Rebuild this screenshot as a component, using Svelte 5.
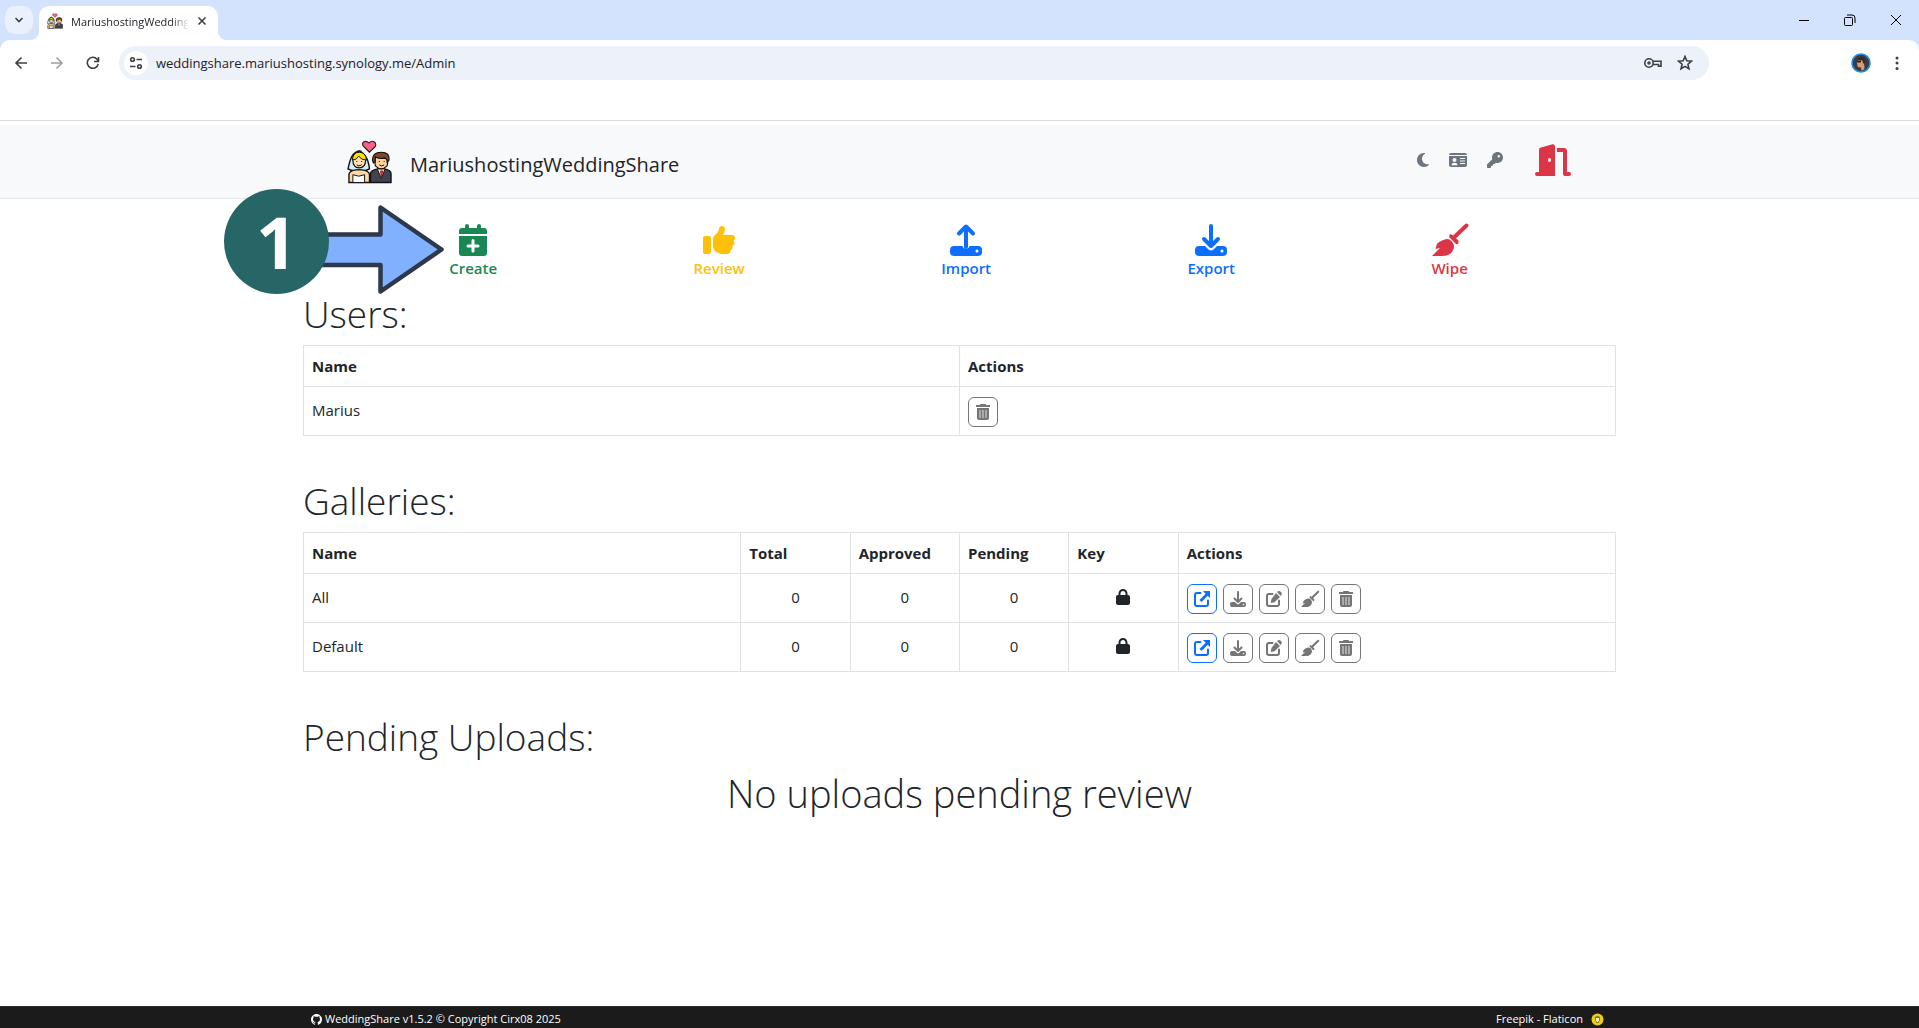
<script lang="ts">
	let address = $state('weddingshare.mariushosting.synology.me/Admin');

	const tools = [
		{ label: 'Create', icon: 'calendar', tone: 'success' },
		{ label: 'Review', icon: 'thumb', tone: 'warning' },
		{ label: 'Import', icon: 'import', tone: 'primary' },
		{ label: 'Export', icon: 'export', tone: 'primary' },
		{ label: 'Wipe', icon: 'broom', tone: 'danger' }
	];

	const users = [{ name: 'Marius' }];

	const galleries = [
		{ name: 'All', total: 0, approved: 0, pending: 0 },
		{ name: 'Default', total: 0, approved: 0, pending: 0 }
	];

	const galleryActions = [
		{ icon: 'open', label: 'Open' },
		{ icon: 'export', label: 'Download' },
		{ icon: 'edit', label: 'Edit' },
		{ icon: 'broom', label: 'Wipe' },
		{ icon: 'trash', label: 'Delete' }
	];
</script>

{#snippet couple()}
	<svg class="couple" viewBox="0 0 46 44" aria-hidden="true">
		<path d="M23 12 16.500 5.500C14.500 2 18.500-1 22.500 2.500 26-1 30.500 1.500 29 6Z" fill="#ff5f87" stroke="#222" stroke-width="1.200" />
		<path d="M12 11C4 13 3 21 1 29q5 3 11 1 6 2 11-1C22 21 20 13 12 11Z" fill="#cdeefa" stroke="#111" stroke-width="1.400" />
		<path d="M2 43V35q0-4 7-5h6q8 1 8 5v8Z" fill="#ffd9a8" stroke="#111" stroke-width="1.400" />
		<path d="M6 43v-8q6 3 12 0v8Z" fill="#fff" stroke="#111" />
		<path d="M6 20q0-7 6.500-7t6.500 7q0 8-6.500 8T6 20Z" fill="#ffdfb3" stroke="#111" stroke-width="1.200" />
		<path d="M5.500 20Q6 12 12.500 12T20 20Q14 20 12 16 10 20 5.500 20Z" fill="#ffdf00" stroke="#111" />
		<path d="M10 11.500q3-1.500 5 0" fill="none" stroke="#222" stroke-width="1.600" />
		<path d="M24 43V34q0-4 8-5h6q7 1 7 5v9Z" fill="#414450" stroke="#111" stroke-width="1.400" />
		<path d="m31 29 4 10 4-10Z" fill="#fff" stroke="#111" />
		<path d="m34 31 1 7 2-7Z" fill="#e0252d" stroke="#900" stroke-width=".500" />
		<path d="M28 18q0-5 7-5t7 5-1 8q-6 6-12 0Z" fill="#ffd49c" stroke="#111" stroke-width="1.200" />
		<path d="M26 20q0-8 9-8t8 8l-2 2q0-4-3-4-6 1-9-1v5l-2 1Z" fill="#7d4725" stroke="#111" stroke-width="1.200" />
		<path d="M10 21v1m5-1v1m-5 3q2 2 5 0m18-4v1m5-1v1m-5 3q2 2 5 0" fill="none" stroke="#111" />
	</svg>
{/snippet}

{#snippet icon(name: string)}
	{#if name === 'calendar'}
		<svg class="icon" viewBox="0 0 448 512" aria-hidden="true">
			<path d="M96 32a32 32 0 0 1 64 0v32h128V32a32 32 0 0 1 64 0v32h48a48 48 0 0 1 48 48v48H0v-48a48 48 0 0 1 48-48h48ZM0 192h448v272a48 48 0 0 1-48 48H48a48 48 0 0 1-48-48Zm200 72v64h-56a24 24 0 0 0 0 48h56v56a24 24 0 0 0 48 0v-56h56a24 24 0 0 0 0-48h-56v-64a24 24 0 0 0-48 0Z" />
		</svg>
	{:else if name === 'thumb'}
		<svg class="icon" viewBox="0 0 512 512" aria-hidden="true">
			<path d="M313.400 32.900c26 5.200 42.900 30.500 37.700 56.500l-2.300 11.400c-5.300 26.700-15.100 52.100-28.800 75.200H464c26.500 0 48 21.500 48 48 0 18.500-10.500 34.600-25.900 42.600C497 275.400 504 288.900 504 304c0 23.400-16.800 42.900-38.900 47.100 4.400 7.300 6.900 15.800 6.900 24.900 0 21.300-13.900 39.400-33.100 45.600.7 3.300 1.100 6.800 1.100 10.400 0 26.500-21.500 48-48 48H294.500c-19 0-37.500-5.600-53.300-16.100l-38.500-25.700C176 420.400 160 390.400 160 358.300V247.100c0-29.200 13.300-56.700 36-75l7.400-5.900c26.500-21.200 44.600-51 51.200-84.200l2.300-11.400c5.200-26 30.500-42.900 56.500-37.700ZM32 192h64c17.700 0 32 14.300 32 32v224c0 17.700-14.300 32-32 32H32c-17.700 0-32-14.300-32-32V224c0-17.700 14.300-32 32-32Z" />
		</svg>
	{:else if name === 'import' || name === 'export'}
		<svg class="icon" viewBox="0 0 32 32" aria-hidden="true">
			{#if name === 'import'}
				<path class="line" d="M16 23V2.500M9 9.500l7-7 7 7" />
				<path d="M4 22h8.500a3.600 3.600 0 0 0 7 0H28a4 4 0 0 1 4 4v2a4 4 0 0 1-4 4H4a4 4 0 0 1-4-4v-2a4 4 0 0 1 4-4Zm23 3.500a1.500 1.500 0 1 0 0 3 1.500 1.500 0 0 0 0-3Z" />
			{:else}
				<path class="line" d="M16 2v20M9 15l7 7 7-7" />
				<path d="M4 22h6l3.500 3.500q2.500 2.200 5 0L22 22h6a4 4 0 0 1 4 4v2a4 4 0 0 1-4 4H4a4 4 0 0 1-4-4v-2a4 4 0 0 1 4-4Zm23 3.500a1.500 1.500 0 1 0 0 3 1.500 1.500 0 0 0 0-3Z" />
			{/if}
		</svg>
	{:else if name === 'broom'}
		<svg class="icon" viewBox="0 0 36 32" aria-hidden="true">
			<path class="line" d="M34.500 1.500 22.500 13" />
			<path d="M18 10q-1.500 2-.5 3.500l6.500 6.500q1.500 1 2.500-1v-2.500l-6-5.500Z" />
			<path d="M14.500 15q2.500-.5 5 2t2.500 6c-.5 5-5 9-11 9H0l8-8-4.500 1q.5-8 11-10Z" />
		</svg>
	{:else if name === 'trash'}
		<svg class="icon" viewBox="0 0 14 16" aria-hidden="true">
			<path fill-rule="evenodd" d="M4.500 0h5l.7 1H14v2H0V1h3.800ZM1 4h12v10a2 2 0 0 1-2 2H3a2 2 0 0 1-2-2Zm2.600 2v8h.8V6Zm3 0v8h.8V6Zm3 0v8h.8V6Z" />
		</svg>
	{:else if name === 'open'}
		<svg class="icon" viewBox="0 0 16 16" aria-hidden="true">
			<path d="M9 0h7v7l-2.300-2.300-6.200 6.200-2-2 6.200-6.200Z" />
			<path class="frame" d="M6.500 2H3Q1 2 1 4v9q0 2 2 2h9q2 0 2-2V9.500" />
		</svg>
	{:else if name === 'edit'}
		<svg class="icon" viewBox="0 0 16 16" aria-hidden="true">
			<path d="m11 1 1-.7q1.500-.8 2.700.4l.7.7q1 1.300 0 2.600L14.700 5ZM10 2l4 4-5.500 5.300L4.700 12l.8-4Z" />
			<path class="frame" d="M6.500 3H3Q1 3 1 5v8q0 2 2 2h8q2 0 2-2V9.500" />
		</svg>
	{:else if name === 'lock'}
		<svg class="icon" viewBox="0 0 448 512" aria-hidden="true">
			<path d="M144 144v48h160v-48c0-44.200-35.800-80-80-80s-80 35.800-80 80Zm-64 48v-48C80 64.500 144.500 0 224 0s144 64.500 144 144v48h16c35.300 0 64 28.700 64 64v192c0 35.300-28.700 64-64 64H64c-35.300 0-64-28.700-64-64V256c0-35.300 28.700-64 64-64Z" />
		</svg>
	{:else if name === 'moon'}
		<svg class="icon" viewBox="0 0 384 512" aria-hidden="true">
			<path d="M223.500 32C100 32 0 132.300 0 256s100 224 223.500 224c60.600 0 115.500-24.200 155.800-63.400 5-4.900 6.300-12.500 3.100-18.700s-10.100-9.700-17-8.500c-9.800 1.700-19.800 2.600-30.100 2.600-96.900 0-175.500-78.800-175.500-176 0-65.800 36-123.100 89.300-153.300 6.100-3.500 9.200-10.500 7.700-17.300s-7.300-11.900-14.300-12.500c-6.300-.5-12.600-.8-19-.8Z" />
		</svg>
	{:else if name === 'card'}
		<svg class="icon" viewBox="0 0 18 16" aria-hidden="true">
			<path fill-rule="evenodd" d="M0 3q0-2 2-2h14q2 0 2 2ZM0 4h18v9q0 2-2 2H2q-2 0-2-2ZM5.500 6a2 2 0 1 0 0 4 2 2 0 0 0 0-4ZM2.500 13.200h6q0-2.200-2-2.200h-2q-2 0-2 2.200ZM11 6v1h5V6Zm0 2.500v1h5v-1Zm0 2.500v1h5v-1Z" />
		</svg>
	{:else if name === 'key'}
		<svg class="icon" viewBox="0 0 512 512" aria-hidden="true">
			<path d="M336 352c97.200 0 176-78.800 176-176S433.200 0 336 0 160 78.800 160 176c0 18.700 2.900 36.800 8.300 53.700L7 391c-4.500 4.500-7 10.600-7 17v80c0 13.300 10.700 24 24 24h80c13.300 0 24-10.700 24-24v-40h40c13.300 0 24-10.700 24-24v-40h40c6.400 0 12.500-2.500 17-7l33.300-33.300c16.900 5.400 35 8.300 53.700 8.300Zm40-256a40 40 0 1 1 0 80 40 40 0 1 1 0-80Z" />
		</svg>
	{:else if name === 'door'}
		<svg class="icon" viewBox="0 0 36 32" aria-hidden="true">
			<path fill-rule="evenodd" d="M4 5.500Q4 4 6 3.500L17.500.200Q20 0 20 2.500V32H2a2 2 0 0 1 0-4h2ZM14.500 14a1.500 2 0 1 0 0 4 1.500 2 0 0 0 0-4Z" />
			<path d="M22 4h7q3 0 3 3v21h2a2 2 0 0 1 0 4h-4q-2 0-2-2V8h-6Z" />
		</svg>
	{/if}
{/snippet}

<div class="window">
	<div class="browser">
		<div class="tabs">
			<button class="tab-search" aria-label="Search tabs">
				<svg viewBox="0 0 10 10" width="10" height="10"><path d="m1.500 3 3.500 3.500L8.500 3" /></svg>
			</button>
			<div class="tab">
				{@render couple()}
				<span class="tab-title">MariushostingWeddingShare</span>
				<button class="plain" aria-label="Close tab">
					<svg viewBox="0 0 10 10" width="10" height="10"><path d="m1.500 1.500 7 7m0-7-7 7" /></svg>
				</button>
			</div>
			<div class="window-buttons">
				<button class="plain" aria-label="Minimize">
					<svg viewBox="0 0 12 12" width="12" height="12"><path d="M1 6.500h10" /></svg>
				</button>
				<button class="plain" aria-label="Restore">
					<svg viewBox="0 0 12 12" width="12" height="12"><path d="M3 1h5q3 0 3 3v5M1.500 3.500h6q1 0 1 1v6q0 1-1 1h-6q-1 0-1-1v-6q0-1 1-1Z" /></svg>
				</button>
				<button class="plain" aria-label="Close">
					<svg viewBox="0 0 12 12" width="12" height="12"><path d="m1 1 10 10M11 1 1 11" /></svg>
				</button>
			</div>
		</div>
		<div class="toolbar">
			<button class="plain" aria-label="Back">
				<svg viewBox="0 0 14 14" width="14" height="14"><path d="M13 7H2m5.500-5.500L2 7l5.500 5.500" /></svg>
			</button>
			<button class="plain faded" aria-label="Forward">
				<svg viewBox="0 0 14 14" width="14" height="14"><path d="M1 7h11M6.500 1.500 12 7l-5.500 5.500" /></svg>
			</button>
			<button class="plain" aria-label="Reload">
				<svg viewBox="0 0 14 14" width="14" height="14"><path d="M12.200 8A5.500 5.500 0 1 1 11 3.200L12.500 5M12.500 1v4.500H8" /></svg>
			</button>
			<div class="address">
				<button class="plain site" aria-label="Site information">
					<svg viewBox="0 0 14 14" width="14" height="14"><circle cx="3.500" cy="3.500" r="1.800" /><path d="M7.500 3.500H13M1 10.500h5.500" /><circle cx="10.500" cy="10.500" r="1.800" /></svg>
				</button>
				<div class="url">
					<input type="text" aria-label="Address" bind:value={address} />
				</div>
				<button class="plain" aria-label="Passwords">
					<svg viewBox="0 0 18 12" width="18" height="12"><circle cx="5" cy="6" r="4.200" /><circle cx="5" cy="6" r="1" /><path d="M9 4.300h8v5h-2.500V7.500H9" /></svg>
				</button>
				<button class="plain" aria-label="Bookmark">
					<svg viewBox="0 0 16 16" width="16" height="16"><path d="m8 1.500 1.800 4.300 4.700.4-3.600 3 1.100 4.600-4-2.400-4 2.400 1.100-4.600-3.600-3 4.700-.4Z" /></svg>
				</button>
			</div>
			<button class="plain" aria-label="Profile">
				<svg class="avatar" viewBox="0 0 20 20" width="20" height="20">
					<circle cx="10" cy="10" r="9" fill="#3b3d45" stroke="#1b8fee" />
					<path d="M7 7.500 6 11l1 3 3 .5.500 3q3-.5 3-3l-.5-4 .5-4Z" fill="#d99a76" />
					<path d="M6.500 7Q7 3.500 11 4q4 .5 3 6l-2 .5-.5-3Z" fill="#3a2a26" />
					<path d="m6 8 4-.3v1.500L7 9.500Z" fill="#161616" />
				</svg>
			</button>
			<button class="plain" aria-label="Menu">
				<svg class="dots" viewBox="0 0 4 14" width="4" height="14"><circle cx="2" cy="2" r="1.500" /><circle cx="2" cy="7" r="1.500" /><circle cx="2" cy="12.500" r="1.500" /></svg>
			</button>
		</div>
	</div>

	<header>
		<div class="header-inner">
			<a class="brand" href="/">
				{@render couple()}
				<span>MariushostingWeddingShare</span>
			</a>
			<nav>
				<button class="plain moon" aria-label="Dark mode">{@render icon('moon')}</button>
				<button class="plain card" aria-label="Identity">{@render icon('card')}</button>
				<button class="plain key" aria-label="Change password">{@render icon('key')}</button>
				<button class="plain door" aria-label="Log out">{@render icon('door')}</button>
			</nav>
		</div>
	</header>

	<main>
		<div class="tools">
			{#each tools as tool}
				<button class="tool {tool.tone}">
					{@render icon(tool.icon)}
					<span>{tool.label}</span>
				</button>
			{/each}
		</div>

		<div class="callout">
			<svg viewBox="0 0 224 106" width="224" height="106" aria-hidden="true">
				<path d="M60 45.500h96.500V18.500L217.500 60.500l-61 42V76H60Z" fill="#80b0ff" stroke="#2d384b" stroke-width="4.500" stroke-linejoin="round" />
			</svg>
			<span class="step">1</span>
		</div>

		<section>
			<h1>Users:</h1>
			<table>
				<thead>
					<tr><th class="half">Name</th><th>Actions</th></tr>
				</thead>
				<tbody>
					{#each users as user}
						<tr>
							<td>{user.name}</td>
							<td class="buttons">
								<div class="actions">
									<button aria-label="Delete">{@render icon('trash')}</button>
								</div>
							</td>
						</tr>
					{/each}
				</tbody>
			</table>
		</section>

		<section>
			<h1>Galleries:</h1>
			<table>
				<colgroup>
					<col class="wide" /><col /><col /><col /><col /><col class="wide" />
				</colgroup>
				<thead>
					<tr>
						<th>Name</th>
						<th>Total</th>
						<th>Approved</th>
						<th>Pending</th>
						<th>Key</th>
						<th>Actions</th>
					</tr>
				</thead>
				<tbody>
					{#each galleries as gallery}
						<tr>
							<td>{gallery.name}</td>
							<td class="center">{gallery.total}</td>
							<td class="center">{gallery.approved}</td>
							<td class="center">{gallery.pending}</td>
							<td class="center lock">{@render icon('lock')}</td>
							<td class="buttons">
								<div class="actions">
									{#each galleryActions as action}
										<button class={action.icon} aria-label={action.label}>{@render icon(action.icon)}</button>
									{/each}
								</div>
							</td>
						</tr>
					{/each}
				</tbody>
			</table>
		</section>

		<section>
			<h1>Pending Uploads:</h1>
			<p class="empty">No uploads pending review</p>
		</section>
	</main>

	<footer>
		<div class="footer-inner">
			<a href="https://github.com/Cirx08/WeddingShare">
				<svg viewBox="0 0 16 16" width="11" height="11" aria-hidden="true">
					<path fill="#fff" d="M8 0C3.580 0 0 3.580 0 8c0 3.540 2.290 6.530 5.470 7.590.4.070.55-.17.55-.38 0-.19-.01-.82-.01-1.490-2.010.37-2.530-.49-2.690-.94-.09-.23-.48-.94-.82-1.130-.28-.15-.68-.52-.01-.53.63-.01 1.080.58 1.230.82.72 1.210 1.870.87 2.330.66.070-.52.28-.87.51-1.070-1.780-.2-3.640-.89-3.640-3.950 0-.87.31-1.590.82-2.150-.08-.2-.36-1.020.080-2.120 0 0 .67-.21 2.200.82.64-.18 1.320-.27 2-.27s1.360.09 2 .27c1.530-1.040 2.200-.82 2.200-.82.44 1.100.16 1.920.080 2.120.51.56.82 1.270.82 2.150 0 3.070-1.870 3.750-3.650 3.950.29.25.54.73.54 1.480 0 1.070-.01 1.930-.01 2.200 0 .21.15.46.55.38A8.010 8.010 0 0 0 16 8c0-4.420-3.580-8-8-8Z" />
				</svg>
				<span>WeddingShare v1.5.2 © Copyright Cirx08 2025</span>
			</a>
			<div class="credits">
				<a href="https://www.flaticon.com">Freepik - Flaticon</a>
				<svg viewBox="0 0 13 13" width="13" height="13" aria-hidden="true">
					<circle cx="6.500" cy="6.500" r="6" fill="#f0cc12" />
					<path d="M4 4q2.500-2 5 0v3L7.500 10h-2L4 7Z" fill="#8c7416" />
					<path d="M5 5h3v2.500L7 9H6L5 7.500Z" fill="#fff3c0" />
				</svg>
			</div>
		</div>
	</footer>
</div>

<style>
	:global(body) {
		margin: 0;
		background: #fff;
		color: #212529;
		font-family: "Open Sans", "Noto Sans", sans-serif;
	}

	* {
		box-sizing: border-box;
	}

	.window {
		display: flex;
		flex-direction: column;
		min-height: 100vh;
	}

	button {
		font: inherit;
		cursor: pointer;
	}

	.plain {
		display: flex;
		align-items: center;
		justify-content: center;
		padding: 0;
		border: 0;
		background: none;
		color: inherit;
	}

	a {
		color: inherit;
		text-decoration: none;
	}

	svg {
		flex: none;
		display: block;
	}

	.icon {
		fill: currentColor;
		overflow: visible;
	}

	.icon .line {
		fill: none;
		stroke: currentColor;
		stroke-width: 4;
		stroke-linecap: round;
		stroke-linejoin: round;
	}

	.icon .frame {
		fill: none;
		stroke: currentColor;
		stroke-width: 2;
		stroke-linecap: round;
	}

	/* browser chrome */
	.browser {
		height: 121px;
		border-bottom: 1px solid #dcdcdc;
		background: #d3e2fd;
	}

	.browser svg {
		fill: none;
		stroke: #3c4043;
		stroke-width: 1.6;
	}

	.tabs {
		display: flex;
		align-items: center;
		height: 40px;
		padding-left: 5px;
	}

	.tab-search {
		display: flex;
		align-items: center;
		justify-content: center;
		width: 28px;
		height: 28px;
		padding: 0;
		border: 0;
		border-radius: 10px;
		background: #ebf1fc;
	}

	.tab {
		position: relative;
		display: flex;
		align-self: flex-end;
		align-items: center;
		gap: 8px;
		width: 179px;
		height: 34px;
		margin-left: 6px;
		padding: 0 11px 4px 8px;
		border-radius: 10px 10px 0 0;
		background: #fff;
		font-size: 11px;
	}

	.tab::before,
	.tab::after {
		content: '';
		position: absolute;
		bottom: 0;
		width: 10px;
		height: 10px;
	}

	.tab::before {
		right: 100%;
		background: radial-gradient(circle at 0 0, #d3e2fd 10px, #fff 11px);
	}

	.tab::after {
		left: 100%;
		background: radial-gradient(circle at 100% 0, #d3e2fd 10px, #fff 11px);
	}

	.tab .couple {
		width: 16px;
		height: 16px;
	}

	.tab-title {
		flex: 1;
		overflow: hidden;
		white-space: nowrap;
		mask-image: linear-gradient(to right, #000 85%, transparent);
	}

	.window-buttons {
		display: flex;
		gap: 34px;
		margin-left: auto;
		padding-right: 17px;
	}

	.window-buttons svg {
		stroke: #000;
		stroke-width: 1;
	}

	.toolbar {
		display: flex;
		align-items: center;
		gap: 22px;
		height: 80px;
		padding: 0 20px 34px 14px;
		border-radius: 10px 10px 0 0;
		background: #fff;
	}

	.faded {
		opacity: 0.5;
	}

	.address {
		display: flex;
		flex: 1;
		align-items: center;
		gap: 15px;
		height: 34px;
		margin: 0 120px 0 -3px;
		padding: 0 16px 0 5px;
		border-radius: 17px;
		background: #ecf1fa;
	}

	.site {
		width: 24px;
		height: 24px;
		margin-right: -7px;
		border-radius: 50%;
		background: #fff;
	}

	.url {
		flex: 1;
	}

	.url input {
		display: block;
		width: 100%;
		padding: 0;
		border: 0;
		background: none;
		color: #1f2023;
		font: inherit;
		font-size: 13px;
		outline: 0;
	}

	.browser .avatar {
		margin-right: 2px;
		stroke: none;
	}

	.browser .dots {
		fill: #3c4043;
		stroke: none;
	}

	/* site header */
	header {
		margin-top: 4px;
		border-bottom: 1px solid #e6e9ec;
		background: #f8f9fb;
	}

	.header-inner,
	main,
	.footer-inner {
		width: 100%;
		max-width: 1313px;
		margin: 0 auto;
	}

	.header-inner {
		display: flex;
		justify-content: space-between;
		height: 73px;
		padding: 0 45px 0 44px;
	}

	.brand {
		display: flex;
		align-items: center;
		gap: 18px;
		font-size: 20px;
	}

	.brand .couple {
		width: 45px;
		height: 44px;
	}

	.brand span {
		padding-top: 5px;
	}

	nav {
		display: flex;
		align-items: center;
		gap: 20px;
		padding-bottom: 3px;
		color: #6c757d;
	}

	nav .icon {
		height: 16px;
	}

	.door {
		margin-left: 12px;
		color: #dc3545;
	}

	.door .icon {
		height: 32px;
	}

	/* admin page */
	main {
		position: relative;
		padding-top: 25px;
	}

	.tools {
		display: flex;
		justify-content: space-around;
		padding: 0 50px 0 48px;
	}

	.tool {
		display: flex;
		flex-direction: column;
		align-items: center;
		padding: 0;
		border: 0;
		background: none;
		font-size: 15px;
		font-weight: 600;
		line-height: 24px;
	}

	.tool .icon {
		height: 32px;
	}

	.success {
		color: #198754;
	}

	.warning {
		color: #ffc107;
	}

	.primary {
		color: #0d6efd;
	}

	.danger {
		color: #dc3545;
	}

	.callout {
		position: absolute;
		top: -10px;
		left: -79px;
	}

	.step {
		position: absolute;
		top: 0;
		left: 0;
		width: 105px;
		height: 105px;
		border-radius: 50%;
		background: #276666;
		color: #fff;
		font-size: 72px;
		font-weight: 700;
		line-height: 105px;
		text-align: center;
	}

	section {
		padding-top: 10px;
	}

	section + section {
		padding-top: 41px;
	}

	h1,
	.empty {
		margin: 0 0 7px;
		font-size: 38px;
		font-weight: 300;
		line-height: 48px;
	}

	h1 {
		font-size: 37px;
	}

	.empty {
		margin-top: 8px;
		text-align: center;
	}

	table {
		width: 100%;
		border-collapse: collapse;
		table-layout: fixed;
		font-size: 15px;
		line-height: 24px;
	}

	.wide {
		width: 33.3333%;
	}

	.half {
		width: 50%;
	}

	th,
	td {
		height: 41px;
		padding: 8px;
		border: 1px solid #dee2e6;
		text-align: left;
	}

	td {
		height: 49px;
		padding-bottom: 10px;
	}

	td.buttons {
		padding: 10px 8px 8px;
	}

	th {
		font-weight: 700;
	}

	td.center {
		text-align: center;
	}

	.lock .icon {
		height: 16px;
		margin: 0 auto;
	}

	.actions {
		display: flex;
		gap: 6px;
	}

	.actions button {
		display: flex;
		align-items: center;
		justify-content: center;
		width: 30px;
		height: 30px;
		padding: 0;
		border: 1px solid #757575;
		border-radius: 6px;
		background: none;
		color: #757575;
	}

	.actions .open {
		border-color: #0d6efd;
		color: #0d6efd;
	}

	.actions .icon {
		height: 16px;
	}

	footer {
		margin-top: auto;
		border-top: 1px solid #2c302f;
		background: #1b1b1b;
		color: #fff;
		font-size: 11px;
		line-height: 18px;
	}

	.footer-inner,
	.footer-inner a,
	.credits {
		display: flex;
		align-items: center;
	}

	.footer-inner {
		justify-content: space-between;
		height: 21px;
		padding: 3px 12px 0 8px;
	}

	.footer-inner a {
		gap: 3px;
	}

	.credits {
		gap: 8px;
	}
</style>
